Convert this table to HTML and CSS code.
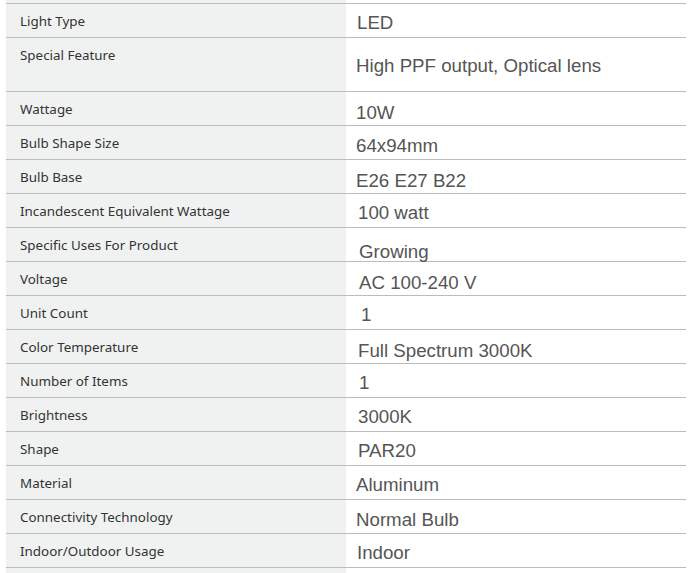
FILE: index.html
```html
<!DOCTYPE html>
<html>
<head>
<meta charset="utf-8">
<link rel="stylesheet" href="styles.css">
</head>
<body>
<div class="spec">
  <div class="row"><div class="label">Light Type</div><div class="value x11 y5">LED</div></div>
  <div class="row tall"><div class="label">Special Feature</div><div class="value y2">High PPF output, Optical lens</div></div>
  <div class="row"><div class="label">Wattage</div><div class="value x10 y8">10W</div></div>
  <div class="row"><div class="label">Bulb Shape Size</div><div class="value y7">64x94mm</div></div>
  <div class="row"><div class="label">Bulb Base</div><div class="value y9">E26 E27 B22</div></div>
  <div class="row"><div class="label">Incandescent Equivalent Wattage</div><div class="value x12 y5">100 watt</div></div>
  <div class="row"><div class="label">Specific Uses For Product</div><div class="value x13 y13">Growing</div></div>
  <div class="row"><div class="label">Voltage</div><div class="value x13 y8">AC 100-240 V</div></div>
  <div class="row"><div class="label">Unit Count</div><div class="value x15 y5">1</div></div>
  <div class="row"><div class="label">Color Temperature</div><div class="value x12 y9">Full Spectrum 3000K</div></div>
  <div class="row"><div class="label">Number of Items</div><div class="value x13 y4">1</div></div>
  <div class="row"><div class="label">Brightness</div><div class="value x12 y4">3000K</div></div>
  <div class="row"><div class="label">Shape</div><div class="value x12 y4">PAR20</div></div>
  <div class="row"><div class="label">Material</div><div class="value y4">Aluminum</div></div>
  <div class="row"><div class="label">Connectivity Technology</div><div class="value x10 y6">Normal Bulb</div></div>
  <div class="row last"><div class="label">Indoor/Outdoor Usage</div><div class="value x11 y4">Indoor</div></div>
</div>
</body>
</html>
```
FILE: styles.css
```css
html, body {
  margin: 0;
  padding: 0;
  background: #ffffff;
}

.spec {
  margin-left: 6px;
  width: 680px;
  padding-top: 3px;
  padding-bottom: 20px;
  background: linear-gradient(to right, #f0f2f2 340px, #ffffff 340px);
}

.row {
  display: grid;
  grid-template-columns: 340px 340px;
  border-top: 1px solid #bcbcbc;
  height: 33px;
}

.row.tall {
  height: 53px;
}

.row.last {
  border-bottom: 1px solid #bcbcbc;
}

.label {
  padding: 8px 14px 6px;
  font-family: "Noto Sans", "Open Sans", sans-serif;
  font-size: 13.4px;
  line-height: 19px;
  color: #333333;
}

.value {
  box-sizing: border-box;
  height: 100%;
  display: flex;
  align-items: center;
  padding-left: 10px;
  padding-top: 4px;
  font-family: "Liberation Sans", Arial, sans-serif;
  font-size: 18.7px;
  line-height: 22px;
  color: #555555;
  white-space: nowrap;
}

.x10 { padding-left: 10px; }
.x11 { padding-left: 11px; }
.x12 { padding-left: 12px; }
.x13 { padding-left: 13px; }
.x15 { padding-left: 15px; }

.y2 { padding-top: 2px; }
.y4 { padding-top: 4px; }
.y5 { padding-top: 5px; }
.y6 { padding-top: 6px; }
.y7 { padding-top: 7px; }
.y8 { padding-top: 8px; }
.y9 { padding-top: 9px; }
.y13 { padding-top: 13px; }
```
